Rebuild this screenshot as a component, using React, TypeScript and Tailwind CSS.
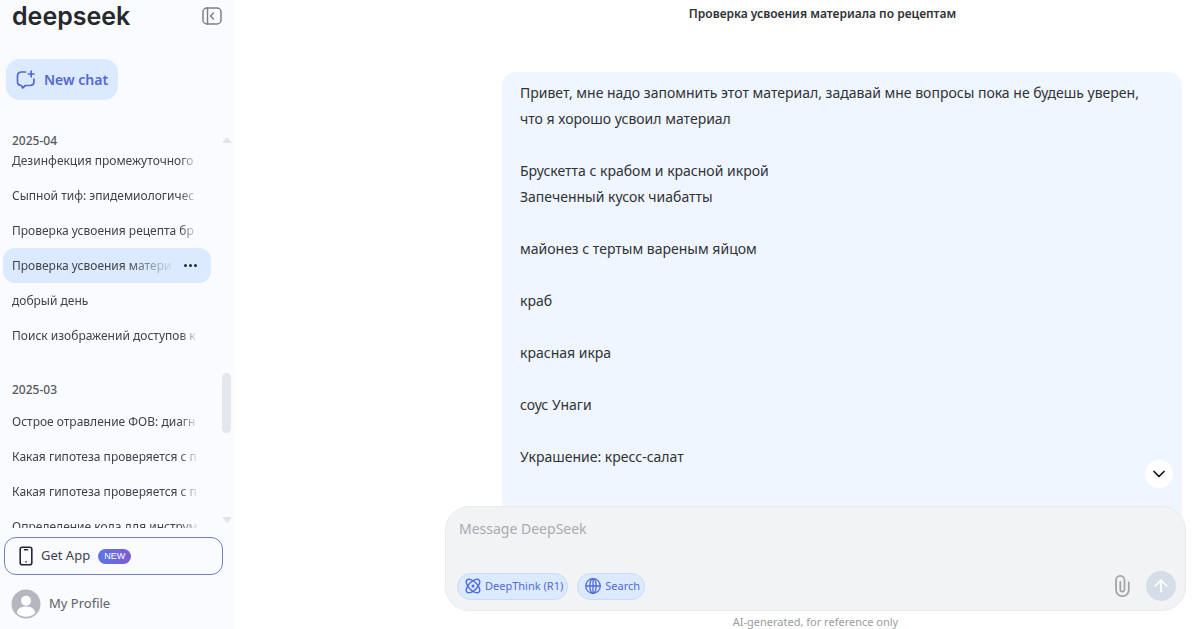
import { ArrowUp, ChevronDown } from 'lucide-react';
import { clsx } from 'clsx';

const groups = [
  {
    label: '2025-04',
    chats: [
      { title: 'Дезинфекция промежуточного' },
      { title: 'Сыпной тиф: эпидемиологичес' },
      { title: 'Проверка усвоения рецепта бр' },
      { title: 'Проверка усвоения матери', active: true },
      { title: 'добрый день' },
      { title: 'Поиск изображений доступов к' },
    ],
  },
  {
    label: '2025-03',
    chats: [
      { title: 'Острое отравление ФОВ: диагн' },
      { title: 'Какая гипотеза проверяется с п' },
      { title: 'Какая гипотеза проверяется с п' },
      { title: 'Определение кода для инструм' },
    ],
  },
];

const message = `Привет, мне надо запомнить этот материал, задавай мне вопросы пока не будешь уверен, что я хорошо усвоил материал

Брускетта с крабом и красной икрой
Запеченный кусок чиабатты

майонез с тертым вареным яйцом

краб

красная икра

соус Унаги

Украшение: кресс-салат`;

function CollapseIcon() {
  return (
    <svg viewBox="0 0 20 18" className="w-5 h-[18px]" fill="none" stroke="#808184" strokeWidth="1.5" strokeLinecap="round" strokeLinejoin="round">
      <rect x="1" y="1" width="18" height="16" rx="4" />
      <path d="M5.5 1v16M11.500 6 8.500 9l3 3" />
    </svg>
  );
}

function NewChatIcon() {
  return (
    <svg viewBox="0 0 20 20" className="w-5 h-5" fill="none" stroke="#5468d4" strokeWidth="1.7" strokeLinecap="round" strokeLinejoin="round">
      <path d="M9.500 2H5.500C3 2 1.500 3.500 1.500 6v5.500c0 2.500 1.500 4 4 4l1 2.500 3-2.500h4c2.500 0 4.500-1.500 4.500-4V9" />
      <path d="M15.200 1.200v5.600M12.400 4H18" />
    </svg>
  );
}

function PhoneIcon() {
  return (
    <svg viewBox="0 0 14 20" className="w-3.5 h-5" fill="none" stroke="#26282c" strokeWidth="1.600" strokeLinecap="round">
      <rect x="1.200" y="1.200" width="11.600" height="17.600" rx="2" />
      <path d="M5.500 3.800h3M7 15.800v.1" />
    </svg>
  );
}

function AvatarIcon() {
  return (
    <svg viewBox="0 0 30 30" className="w-[30px] h-[30px]">
      <circle cx="15" cy="15" r="14.500" fill="#b5b6bf" />
      <circle cx="15" cy="11.700" r="5" fill="#fff" />
      <path d="M5.800 24c.6-4.500 4.300-6.500 9.200-6.500s8.600 2 9.200 6.500a13 13 0 0 1-18.400 0z" fill="#fff" />
    </svg>
  );
}

function AtomIcon() {
  return (
    <svg viewBox="0 0 16 16" className="w-4 h-4" fill="none" stroke="#4d6bdd" strokeWidth="1.400">
      <ellipse cx="8" cy="8" rx="8.600" ry="4.200" transform="rotate(45 8 8)" />
      <ellipse cx="8" cy="8" rx="8.600" ry="4.200" transform="rotate(-45 8 8)" />
      <circle cx="8" cy="8" r="1.500" fill="#4d6bdd" stroke="none" />
    </svg>
  );
}

function GlobeIcon() {
  return (
    <svg viewBox="0 0 16 16" className="w-4 h-4" fill="none" stroke="#4d6bdd" strokeWidth="1.300">
      <circle cx="8" cy="8" r="7.300" />
      <ellipse cx="8" cy="8" rx="3.200" ry="7.300" />
      <path d="M.7 8h14.600M8 .7v14.600" />
    </svg>
  );
}

function ClipIcon() {
  return (
    <svg viewBox="0 0 16 22" className="w-4 h-[22px]" fill="none" stroke="#a3a5a8" strokeWidth="1.800" strokeLinecap="round">
      <path d="M14.800 7.500v7.300a6.400 6.400 0 0 1-12.800 0V5.200a4.200 4.200 0 0 1 8.500 0v9.300a2.100 2.100 0 0 1-4.200 0V7" />
    </svg>
  );
}

function Sidebar() {
  return (
    <aside className="w-[234px] shrink-0 flex flex-col bg-[#f9fbff] overflow-hidden">
      <div className="h-8 shrink-0 px-3 flex items-center justify-between">
        <a href="#home" className="text-[#26282c] text-[25px] leading-8 font-semibold font-[Inter,sans-serif]">deepseek</a>
        <button aria-label="Collapse sidebar">
          <CollapseIcon />
        </button>
      </div>

      <div className="shrink-0 pl-1.5 mt-[27px]">
        <button className="h-[41px] px-2.5 rounded-[14px] bg-[#dbeafe] text-[#5468d4] text-sm font-semibold flex items-center gap-2">
          <NewChatIcon />
          New chat
        </button>
      </div>

      {/* History */}
      <div className="flex-1 min-h-0 mt-[31px] flex justify-between px-[3px]">
        <nav className="w-[208px] overflow-hidden">
          {groups.map((group, i) => (
            <section key={group.label} className={i > 0 ? 'mt-[27px]' : ''}>
              <h2 className="h-5 pl-[9px] text-xs leading-5 font-medium text-[#55585e]">{group.label}</h2>
              <ul className={i > 0 ? 'mt-1' : '-mt-2'}>
                {group.chats.map((chat, j) => (
                  <li
                    key={j}
                    className={clsx(
                      'h-[35px] pl-[9px] pr-3 flex items-center justify-between rounded-xl text-xs text-[#404247]',
                      chat.active && 'bg-[#dbeafe]'
                    )}
                  >
                    <a
                      href="#chat"
                      className={clsx(
                        'block overflow-hidden whitespace-nowrap',
                        chat.active
                          ? 'w-[164px] mask-[linear-gradient(to_right,#000_70%,transparent)]'
                          : 'w-[190px] mask-[linear-gradient(to_right,#000_90%,transparent)]'
                      )}
                    >
                      {chat.title}
                    </a>
                    {chat.active && (
                      <button aria-label="Chat options" className="flex gap-[2px] pr-[2px]">
                        <span className="size-[3px] rounded-full bg-[#26282c]" />
                        <span className="size-[3px] rounded-full bg-[#26282c]" />
                        <span className="size-[3px] rounded-full bg-[#26282c]" />
                      </button>
                    )}
                  </li>
                ))}
              </ul>
            </section>
          ))}
        </nav>
        <div className="w-[9px] flex flex-col items-center pt-[6px] pb-[5px]">
          <span className="border-x-[5px] border-x-transparent border-b-[6px] border-b-[#e1e4e8]" />
          <span className="mt-[230px] w-[9px] h-[60px] rounded-full bg-[#e4e7eb]" />
          <span className="mt-auto border-x-[5px] border-x-transparent border-t-[6px] border-t-[#e1e4e8]" />
        </div>
      </div>

      <div className="shrink-0 pl-1 pr-[11px] mt-[9px]">
        <button className="w-full h-[38px] pl-3.5 flex items-center rounded-xl border border-[#7483bd] text-[13px] text-[#404247]">
          <PhoneIcon />
          <span className="ml-2">Get App</span>
          <span className="ml-2 w-[33px] h-[15px] rounded-full bg-linear-to-r from-[#5b74e6] to-[#7c5cd0] text-white text-[9px] leading-[15px] text-center font-['Liberation_Sans',sans-serif]">NEW</span>
        </button>
      </div>
      <button className="shrink-0 mt-3.5 mb-2.5 pl-[11px] flex items-center gap-2 text-[13px] text-[#5d6066]">
        <AvatarIcon />
        My Profile
      </button>
    </aside>
  );
}

function Composer() {
  return (
    <form className="relative -mt-6 h-[105px] shrink-0 rounded-[24px] border border-[#e9ebee] bg-[#f2f3f5] pl-[11px] pr-[9px] pb-[9px] flex flex-col justify-between">
      <textarea
        aria-label="Message"
        placeholder="Message DeepSeek"
        rows={1}
        className="mt-2.5 px-0.5 h-6 text-sm leading-6 bg-transparent resize-none outline-none placeholder:text-[#a9abae]"
      />
      <div className="flex items-center gap-[9px] text-[11px] text-[#5468d4]">
        <button type="button" className="h-[27px] pl-[7px] pr-1 rounded-full border border-[#cbdcf5] bg-[#dbeafe] flex items-center gap-1">
          <AtomIcon />
          DeepThink (R1)
        </button>
        <button type="button" className="h-[27px] pl-[7px] pr-1 rounded-full border border-[#cbdcf5] bg-[#dbeafe] flex items-center gap-1">
          <GlobeIcon />
          Search
        </button>
        <button type="button" aria-label="Attach file" className="ml-auto">
          <ClipIcon />
        </button>
        <button aria-label="Send" className="ml-[7px] w-[30px] h-[30px] rounded-full bg-[#d4dde8] text-white flex items-center justify-center">
          <ArrowUp className="w-5 h-5" />
        </button>
      </div>
      <button
        type="button"
        aria-label="Scroll to bottom"
        className="absolute right-3 -top-[47px] w-7 h-7 rounded-full bg-white text-[#111] flex items-center justify-center"
      >
        <ChevronDown className="w-5 h-5" />
      </button>
    </form>
  );
}

export default function App() {
  return (
    <div className="h-screen flex bg-white font-['Noto_Sans',sans-serif]">
      <Sidebar />
      <main className="flex-1 min-w-0 flex flex-col pl-[211px]">
        <h1 className="h-7 shrink-0 text-center text-xs leading-7 font-semibold text-[#303236]">
          Проверка усвоения материала по рецептам
        </h1>
        <div className="flex-1 min-h-0 flex flex-col pr-3.5">
          <div className="flex-1 min-h-0 pt-11 pl-[57px] pr-1 flex flex-col">
            <div className="flex-1 min-h-0 overflow-hidden rounded-t-[14px] bg-[#eff6ff] pl-[18px] pr-9 pt-2 text-sm leading-[26px] text-[#303236] whitespace-pre-wrap">
              {message}
            </div>
          </div>
          <Composer />
          <p className="shrink-0 h-[18px] pt-0.5 text-center text-[11px] leading-[18px] text-[#9a9da1]">AI-generated, for reference only</p>
        </div>
      </main>
    </div>
  );
}
